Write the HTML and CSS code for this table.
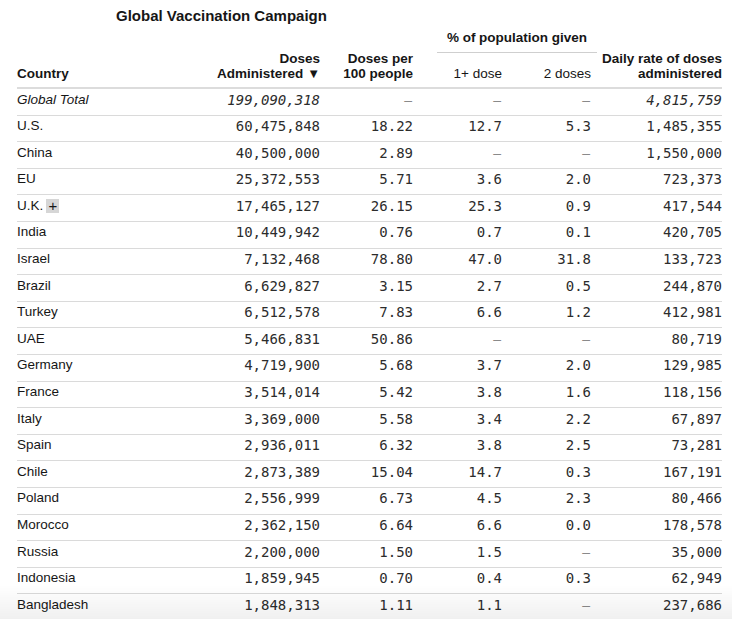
FILE: index.html
```html
<!DOCTYPE html>
<html>
<head>
<meta charset="utf-8">
<link rel="stylesheet" href="styles.css">
</head>
<body>
<div class="wrap">
  <div class="title">Global Vaccination Campaign</div>
  <table class="vax">
    <colgroup>
      <col class="c-country"><col class="c-doses"><col class="c-per"><col class="c-one"><col class="c-two"><col class="c-daily">
    </colgroup>
    <thead>
      <tr class="grp">
        <th rowspan="2" class="h left">Country</th>
        <th rowspan="2" class="h">Doses<br>Administered <span class="arrow">▼</span></th>
        <th rowspan="2" class="h">Doses per<br>100 people</th>
        <th colspan="2" class="grp-cell"><div class="grp-label">% of population given</div></th>
        <th rowspan="2" class="h">Daily rate of doses<br>administered</th>
      </tr>
      <tr>
        <th class="h sub">1+ dose</th>
        <th class="h sub">2 doses</th>
      </tr>
    </thead>
    <tbody>
      <tr class="total"><td class="name">Global Total</td><td>199,090,318</td><td class="na">–</td><td class="na">–</td><td class="na">–</td><td>4,815,759</td></tr>
      <tr><td class="name">U.S.</td><td>60,475,848</td><td>18.22</td><td>12.7</td><td>5.3</td><td>1,485,355</td></tr>
      <tr><td class="name">China</td><td>40,500,000</td><td>2.89</td><td class="na">–</td><td class="na">–</td><td>1,550,000</td></tr>
      <tr><td class="name">EU</td><td>25,372,553</td><td>5.71</td><td>3.6</td><td>2.0</td><td>723,373</td></tr>
      <tr><td class="name">U.K.<span class="plus">+</span></td><td>17,465,127</td><td>26.15</td><td>25.3</td><td>0.9</td><td>417,544</td></tr>
      <tr><td class="name">India</td><td>10,449,942</td><td>0.76</td><td>0.7</td><td>0.1</td><td>420,705</td></tr>
      <tr><td class="name">Israel</td><td>7,132,468</td><td>78.80</td><td>47.0</td><td>31.8</td><td>133,723</td></tr>
      <tr><td class="name">Brazil</td><td>6,629,827</td><td>3.15</td><td>2.7</td><td>0.5</td><td>244,870</td></tr>
      <tr><td class="name">Turkey</td><td>6,512,578</td><td>7.83</td><td>6.6</td><td>1.2</td><td>412,981</td></tr>
      <tr><td class="name">UAE</td><td>5,466,831</td><td>50.86</td><td class="na">–</td><td class="na">–</td><td>80,719</td></tr>
      <tr><td class="name">Germany</td><td>4,719,900</td><td>5.68</td><td>3.7</td><td>2.0</td><td>129,985</td></tr>
      <tr><td class="name">France</td><td>3,514,014</td><td>5.42</td><td>3.8</td><td>1.6</td><td>118,156</td></tr>
      <tr><td class="name">Italy</td><td>3,369,000</td><td>5.58</td><td>3.4</td><td>2.2</td><td>67,897</td></tr>
      <tr><td class="name">Spain</td><td>2,936,011</td><td>6.32</td><td>3.8</td><td>2.5</td><td>73,281</td></tr>
      <tr><td class="name">Chile</td><td>2,873,389</td><td>15.04</td><td>14.7</td><td>0.3</td><td>167,191</td></tr>
      <tr><td class="name">Poland</td><td>2,556,999</td><td>6.73</td><td>4.5</td><td>2.3</td><td>80,466</td></tr>
      <tr><td class="name">Morocco</td><td>2,362,150</td><td>6.64</td><td>6.6</td><td>0.0</td><td>178,578</td></tr>
      <tr><td class="name">Russia</td><td>2,200,000</td><td>1.50</td><td>1.5</td><td class="na">–</td><td>35,000</td></tr>
      <tr><td class="name">Indonesia</td><td>1,859,945</td><td>0.70</td><td>0.4</td><td>0.3</td><td>62,949</td></tr>
      <tr><td class="name">Bangladesh</td><td>1,848,313</td><td>1.11</td><td>1.1</td><td class="na">–</td><td>237,686</td></tr>
    </tbody>
  </table>
</div>
<div class="fade"></div>
</body>
</html>
```

FILE: styles.css
```css
html, body {
  margin: 0;
  padding: 0;
  background: #fff;
  color: #161616;
  font-family: "Liberation Sans", Arial, sans-serif;
  overflow: hidden;
}

.wrap {
  padding: 6px 10px 0 17px;
}

.title {
  font-size: 15px;
  font-weight: bold;
  line-height: 20px;
  padding-left: 99px;
  margin-bottom: 4px;
}

.vax {
  border-collapse: collapse;
  table-layout: fixed;
  width: 705px;
  font-size: 13.5px;
}

.c-country { width: 183px; }
.c-doses { width: 120px; }
.c-per { width: 93px; }
.c-one { width: 89px; }
.c-two { width: 89px; }
.c-daily { width: 131px; }

.vax th {
  padding: 0;
  text-align: right;
  vertical-align: bottom;
  font-weight: bold;
  line-height: 15px;
}

.vax th.h {
  padding-bottom: 6px;
  border-bottom: 2px solid #dcdcdc;
}

.vax th.left {
  text-align: left;
}

.vax th.sub {
  font-weight: normal;
  padding-top: 13px;
}

.arrow {
  font-size: 13px;
}

.grp-cell {
  padding: 7px 0 0 0;
}

.grp-label {
  margin-left: 24px;
  margin-right: -6px;
  text-align: center;
  line-height: 16px;
  padding-bottom: 6px;
  border-bottom: 1px solid #cfcfcf;
}

.vax td {
  padding: 1.5px 0 6.1px;
  line-height: 18px;
  text-align: right;
  border-bottom: 1px solid #dadada;
  font-family: "DejaVu Sans Mono", monospace;
  font-size: 14px;
  color: #2c2c2c;
  white-space: nowrap;
}

.vax td.name {
  text-align: left;
  font-family: "Liberation Sans", Arial, sans-serif;
  font-size: 13.5px;
  color: #161616;
}

.vax tr.total td {
  font-style: italic;
}

.vax td.na {
  color: #8a8a8a;
  font-family: "Liberation Sans", Arial, sans-serif;
  padding-right: 1px;
}

.plus {
  display: inline-block;
  width: 13px;
  height: 14px;
  line-height: 14px;
  margin-left: 3px;
  background: #d6d6d6;
  text-align: center;
  font-size: 15px;
  vertical-align: -1px;
}

.fade {
  position: fixed;
  left: 0;
  right: 0;
  bottom: 0;
  height: 34px;
  background: linear-gradient(to bottom, rgba(0,0,0,0), rgba(0,0,0,0.06));
  pointer-events: none;
}
```
